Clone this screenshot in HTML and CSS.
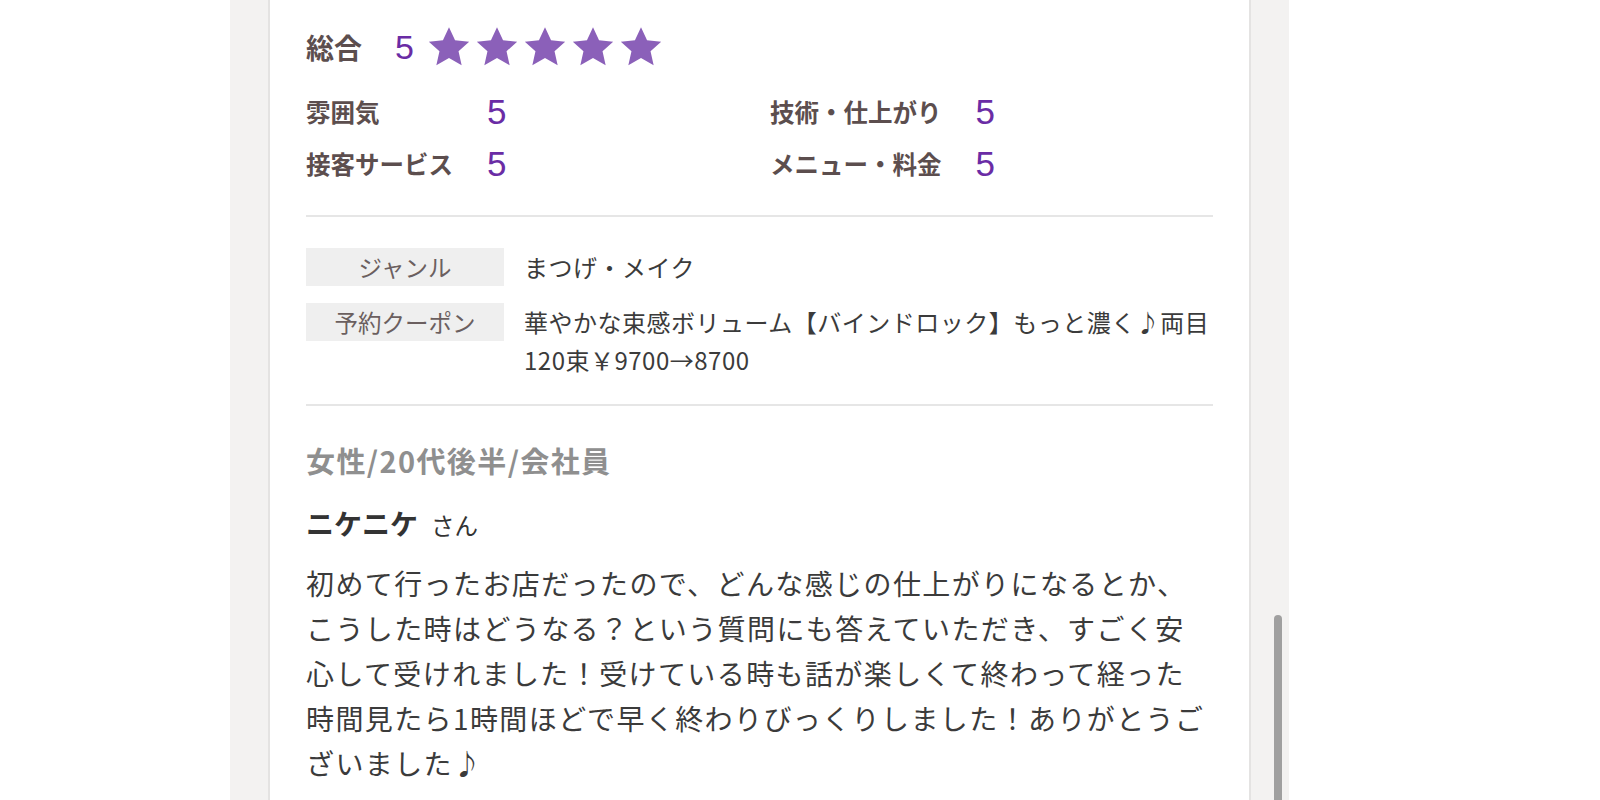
FILE: index.html
```
<!DOCTYPE html>
<html lang="ja">
<head>
  <meta charset="UTF-8">
  <title>口コミ</title>
  <link rel="stylesheet" href="styles.css">
</head>
<body>

<div class="page">
  <div class="card">

    <!-- Ratings -->
    <div class="ratings">
      <div class="total">
        <span class="total-label">総合</span>
        <span class="total-score">5</span>
        <div class="stars">
          <svg class="star" viewBox="0 0 24 24"><path d="M12 1.2l3.3 7.1 7.7.8-5.8 5.2 1.7 7.6L12 18l-6.9 3.9 1.7-7.6L1 9.1l7.7-.8z"/></svg>
          <svg class="star" viewBox="0 0 24 24"><path d="M12 1.2l3.3 7.1 7.7.8-5.8 5.2 1.7 7.6L12 18l-6.9 3.9 1.7-7.6L1 9.1l7.7-.8z"/></svg>
          <svg class="star" viewBox="0 0 24 24"><path d="M12 1.2l3.3 7.1 7.7.8-5.8 5.2 1.7 7.6L12 18l-6.9 3.9 1.7-7.6L1 9.1l7.7-.8z"/></svg>
          <svg class="star" viewBox="0 0 24 24"><path d="M12 1.2l3.3 7.1 7.7.8-5.8 5.2 1.7 7.6L12 18l-6.9 3.9 1.7-7.6L1 9.1l7.7-.8z"/></svg>
          <svg class="star" viewBox="0 0 24 24"><path d="M12 1.2l3.3 7.1 7.7.8-5.8 5.2 1.7 7.6L12 18l-6.9 3.9 1.7-7.6L1 9.1l7.7-.8z"/></svg>
        </div>
      </div>

      <div class="sub-ratings">
        <div class="sub-col">
          <span class="sub-label">雰囲気</span><span class="sub-score">5</span>
          <span class="sub-label">接客サービス</span><span class="sub-score">5</span>
        </div>
        <div class="sub-col">
          <span class="sub-label">技術・仕上がり</span><span class="sub-score">5</span>
          <span class="sub-label">メニュー・料金</span><span class="sub-score">5</span>
        </div>
      </div>
    </div>

    <!-- Genre / coupon -->
    <div class="info">
      <div class="info-label">ジャンル</div>
      <div class="info-value">まつげ・メイク</div>
      <div class="info-label">予約クーポン</div>
      <div class="info-value">華やかな束感ボリューム【バインドロック】もっと濃く♪両目<br>120束￥9700→8700</div>
    </div>

    <!-- Review -->
    <div class="review">
      <div class="reviewer">女性/20代後半/会社員</div>
      <div class="name"><strong>ニケニケ</strong><span class="san">さん</span></div>
      <p class="body">初めて行ったお店だったので、どんな感じの仕上がりになるとか、こうした時はどうなる？という質問にも答えていただき、すごく安心して受けれました！受けている時も話が楽しくて終わって経った時間見たら1時間ほどで早く終わりびっくりしました！ありがとうございました♪</p>
    </div>

  </div>
  <div class="scroll-thumb"></div>
</div>

</body>
</html>
```

FILE: styles.css
```
html, body {
  height: 800px;
  overflow: hidden;
}

body {
  margin: 0;
  background: #fff;
  font-family: "Noto Sans CJK JP", "Noto Sans", sans-serif;
  color: #3b3b3b;
}

.page {
  position: relative;
  width: 983px;
  margin-left: 230px;
  padding: 0 38px;
  min-height: 800px;
  background: #f3f2f1;
}

.card {
  background: #fff;
  border-left: 2px solid #e4e3e2;
  border-right: 2px solid #e4e3e2;
  padding: 25px 36px 0;
  min-height: 800px;
}

/* ratings */
.ratings {
  padding-bottom: 25px;
  border-bottom: 2px solid #e6e6e6;
}

.total {
  display: flex;
  align-items: center;
  height: 44px;
}

.total-label {
  font-size: 28px;
  font-weight: bold;
  color: #5c4e4e;
  margin-right: 33px;
}

.total-score,
.sub-score {
  font-family: "Liberation Sans", sans-serif;
  color: #6a2ca5;
}

.total-score {
  font-size: 34px;
  margin-right: 13px;
}

.stars {
  display: flex;
  gap: 4px;
}

.star {
  width: 44px;
  height: 44px;
  fill: #8b60b9;
}

.sub-ratings {
  display: grid;
  grid-template-columns: 464px 1fr;
  margin-top: 17px;
}

.sub-col {
  display: grid;
  grid-template-columns: max-content 1fr;
  column-gap: 34px;
  align-items: center;
}

.sub-label {
  font-size: 24.5px;
  font-weight: bold;
  color: #5c4e4e;
  line-height: 52px;
}

.sub-score {
  font-size: 35px;
  line-height: 52px;
}

/* genre / coupon */
.info {
  display: grid;
  grid-template-columns: 198px 1fr;
  column-gap: 20px;
  row-gap: 17px;
  align-items: start;
  padding: 31px 0 25px;
  border-bottom: 2px solid #e6e6e6;
}

.info-label {
  background: #efefef;
  color: #6b5f5f;
  font-size: 23.5px;
  line-height: 38px;
  text-align: center;
}

.info-value {
  font-size: 24px;
  letter-spacing: 0.5px;
  line-height: 38px;
  color: #3b3b3b;
}

/* review */
.review {
  padding-top: 34px;
}

.reviewer {
  font-size: 29px;
  font-weight: bold;
  letter-spacing: 1.4px;
  line-height: 40px;
  color: #8f8f8f;
}

.name {
  margin-top: 23px;
  line-height: 40px;
  font-size: 28px;
  color: #333;
}

.san {
  font-size: 23.5px;
  margin-left: 13px;
}

.body {
  margin: 16px 0 0;
  font-size: 28px;
  letter-spacing: 1.4px;
  line-height: 45px;
  color: #3b3b3b;
}

.scroll-thumb {
  position: absolute;
  top: 615px;
  right: 7px;
  width: 8px;
  height: 200px;
  border-radius: 4px;
  background: #a0a0a0;
}
```
